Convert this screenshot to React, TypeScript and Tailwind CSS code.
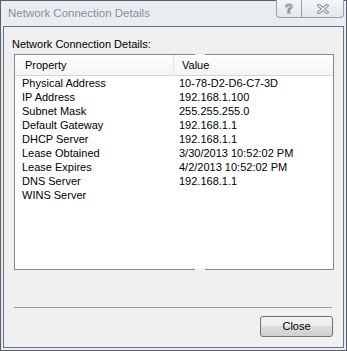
import React from "react";

const rows = [
  ["Physical Address", "10-78-D2-D6-C7-3D"],
  ["IP Address", "192.168.1.100"],
  ["Subnet Mask", "255.255.255.0"],
  ["Default Gateway", "192.168.1.1"],
  ["DHCP Server", "192.168.1.1"],
  ["Lease Obtained", "3/30/2013 10:52:02 PM"],
  ["Lease Expires", "4/2/2013 10:52:02 PM"],
  ["DNS Server", "192.168.1.1"],
  ["WINS Server", ""],
];

const CloseGlyph = () => (
  <svg width="12" height="10" viewBox="0 0 12 10">
    <path d="M2 1.5 L10 8.5 M10 1.5 L2 8.5" stroke="#8a8f96" strokeWidth="3.4" strokeLinecap="square" />
    <path d="M2 1.5 L10 8.5 M10 1.5 L2 8.5" stroke="#eef1f4" strokeWidth="1.4" strokeLinecap="square" />
  </svg>
);

export default function App() {
  return (
    <div
      className="w-[347px] h-[351px] bg-[#e9edf1] border border-[#58616b] flex flex-col text-black"
      style={{ fontFamily: '"Liberation Sans", Arial, sans-serif' }}
    >
      {/* title bar */}
      <div className="h-[25px] flex items-start justify-between shrink-0">
        <div className="pl-[7px] pt-[5px] text-[11.5px] text-[#8a8f96] leading-[14px]">
          Network Connection Details
        </div>
        <div className="flex mr-[2px] -mt-px h-[18px] border border-t-0 border-[#9aa1a9] rounded-b-[4px] bg-gradient-to-b from-[#f3f5f7] to-[#e4e8ec]">
          <div className="w-[25px] flex items-center justify-center border-r border-[#9aa1a9] text-[13px] font-bold text-transparent [-webkit-text-stroke:1px_#8a8f96] leading-none">
            ?
          </div>
          <div className="w-[41px] flex items-center justify-center">
            <CloseGlyph />
          </div>
        </div>
      </div>

      {/* client area */}
      <div className="flex-1 mx-[2px] mb-[2px] border border-[#6b737c] bg-[#f0f0f0] flex flex-col">
        <div className="pl-[8px] pt-[11px] h-[27px] text-[11px] leading-[13px]">
          Network Connection Details:
        </div>

        <div className="relative ml-[10px] w-[320px] h-[216px] border border-[#828790] bg-white flex flex-col">
          <span className="absolute -top-px left-[180px] w-[10px] h-px bg-[#f0f0f0]" />
          <span className="absolute -bottom-px left-[180px] w-[10px] h-px bg-[#f0f0f0]" />

          <div className="h-[21px] flex bg-gradient-to-b from-white to-[#f3f4f6] border-b border-[#d5d5d5] text-[11px] shrink-0">
            <div className="w-[159px] pl-[10px] flex items-center border-r border-[#e3e6ea]">Property</div>
            <div className="flex-1 pl-[8px] flex items-center">Value</div>
          </div>

          <div className="flex flex-col text-[11px]">
            {rows.map(([k, v]) => (
              <div key={k} className="h-[14px] flex items-center leading-[14px]">
                <div className="w-[160px] pl-[7px]">{k}</div>
                <div className="pl-[4px]">{v}</div>
              </div>
            ))}
          </div>
        </div>

        <div className="mt-[37px] ml-[10px] w-[318px] h-px bg-[#a0a0a0]" />

        <div className="flex justify-end pr-[10px] pt-[8px]">
          <button className="w-[73px] h-[21px] rounded-[3px] border border-[#707070] bg-[linear-gradient(#f2f2f2_0%,#ebebeb_50%,#dddddd_50%,#cfcfcf_100%)] text-[11px] leading-none">
            Close
          </button>
        </div>
      </div>
    </div>
  );
}
